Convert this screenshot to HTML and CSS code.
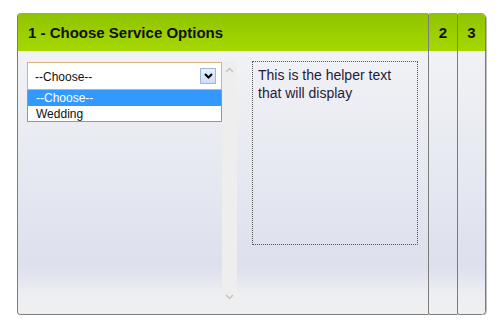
FILE: index.html
```html
<!DOCTYPE html>
<html>
<head>
<meta charset="utf-8">
<link rel="stylesheet" href="styles.css">
</head>
<body>
<div class="stage">
  <section class="pane pane-main">
    <header class="pane-head"><h1 class="title">1 - Choose Service Options</h1></header>
    <div class="pane-body main-body">
      <div class="list-col">
        <div class="picker">
          <div class="select">
            <span class="select-text">--Choose--</span>
            <span class="select-btn">
              <svg width="9" height="6" viewBox="0 0 9 6"><path d="M1 1 L4.5 4.5 L8 1" fill="none" stroke="#000" stroke-width="2"/></svg>
            </span>
          </div>
          <ul class="options">
            <li class="opt opt-active">--Choose--</li>
            <li class="opt">Wedding</li>
          </ul>
        </div>
        <div class="scroll">
          <svg class="arr" width="9" height="6" viewBox="0 0 9 6"><path d="M1 5 L4.5 1.5 L8 5" fill="none" stroke="#c4c4c4" stroke-width="1.5"/></svg>
          <svg class="arr" width="9" height="6" viewBox="0 0 9 6"><path d="M1 1 L4.5 4.5 L8 1" fill="none" stroke="#c4c4c4" stroke-width="1.5"/></svg>
        </div>
      </div>
      <div class="helper">This is the helper text that will display</div>
    </div>
  </section>
  <section class="pane pane-tab">
    <header class="pane-head tab-head">2</header>
    <div class="pane-body"></div>
  </section>
  <section class="pane pane-tab pane-last">
    <header class="pane-head tab-head">3</header>
    <div class="pane-body"></div>
  </section>
</div>
</body>
</html>
```

FILE: styles.css
```css
html, body {
  margin: 0;
  padding: 0;
  background: #ffffff;
  font-family: "Liberation Sans", Arial, sans-serif;
}
.stage {
  display: flex;
  margin: 13px 0 0 17px;
  width: 470px;
  height: 302px;
}
.pane {
  display: flex;
  flex-direction: column;
  border-left: 1px solid #7c7c7c;
  border-bottom: 1px solid #7c7c7c;
  box-shadow: 1px 1px 0 #bdbdbd;
  overflow: hidden;
}
.pane-main {
  width: 410px;
  border-radius: 4px 0 0 4px;
}
.pane-tab {
  width: 28px;
  border-radius: 3px 0 0 3px;
  box-shadow: inset 1px 0 0 #c9c9c9, 1px 1px 0 #bdbdbd;
}
.pane-last {
  width: 27px;
  border-right: 1px solid #7c7c7c;
  border-radius: 3px 5px 5px 3px;
  box-shadow: inset 1px 0 0 #c9c9c9, 1px 1px 0 #bdbdbd;
}
.pane-head {
  height: 38px;
  flex: 0 0 38px;
  background: linear-gradient(#8fc400, #a6d900);
  display: flex;
  align-items: center;
}
.title {
  margin: 1px 0 0 10px;
  font-size: 15px;
  font-weight: bold;
  color: #111;
}
.tab-head {
  justify-content: center;
  font-size: 15px;
  font-weight: bold;
  color: #111;
}
.pane-body {
  flex: 1;
  background: linear-gradient(#f1f2f5 0%, #e4e7f0 55%, #dde0ed 82%, #eceef1 92%, #eff0f2 100%);
}
.main-body {
  display: flex;
  align-items: flex-start;
  padding: 10px 0 0 9px;
}
.list-col {
  display: flex;
  height: 243px;
}
.picker {
  width: 195px;
  padding-top: 1px;
}
.select {
  height: 26px;
  border: 1px solid #d6b179;
  background: #fff;
  display: flex;
  align-items: center;
  justify-content: space-between;
  padding: 0 5px 0 7px;
}
.select-text {
  font-size: 12px;
  color: #111;
  padding-top: 2px;
}
.select-btn {
  width: 14px;
  height: 14px;
  border: 1px solid #9bb5db;
  background: linear-gradient(#e6effc, #cfdff7);
  display: flex;
  align-items: center;
  justify-content: center;
}
.options {
  list-style: none;
  margin: 0;
  padding: 0;
  background: #fff;
  border: 1px solid #7f9db9;
  border-top: 0;
}
.opt {
  height: 15px;
  line-height: 16px;
  font-size: 12px;
  padding-left: 8px;
  color: #111;
}
.opt-active {
  height: 16px;
  line-height: 17px;
  background: #3399ff;
  color: #fff;
}
.scroll {
  width: 15px;
  background: #eeeeee;
  display: flex;
  flex-direction: column;
  justify-content: space-between;
  align-items: center;
  padding: 6px 0 4px;
  box-sizing: border-box;
}
.helper {
  margin-left: 15px;
  width: 159px;
  height: 178px;
  border: 1px dotted #555;
  padding: 4px 0 0 5px;
  font-size: 14px;
  line-height: 18px;
  color: #1f1a3a;
}
```
